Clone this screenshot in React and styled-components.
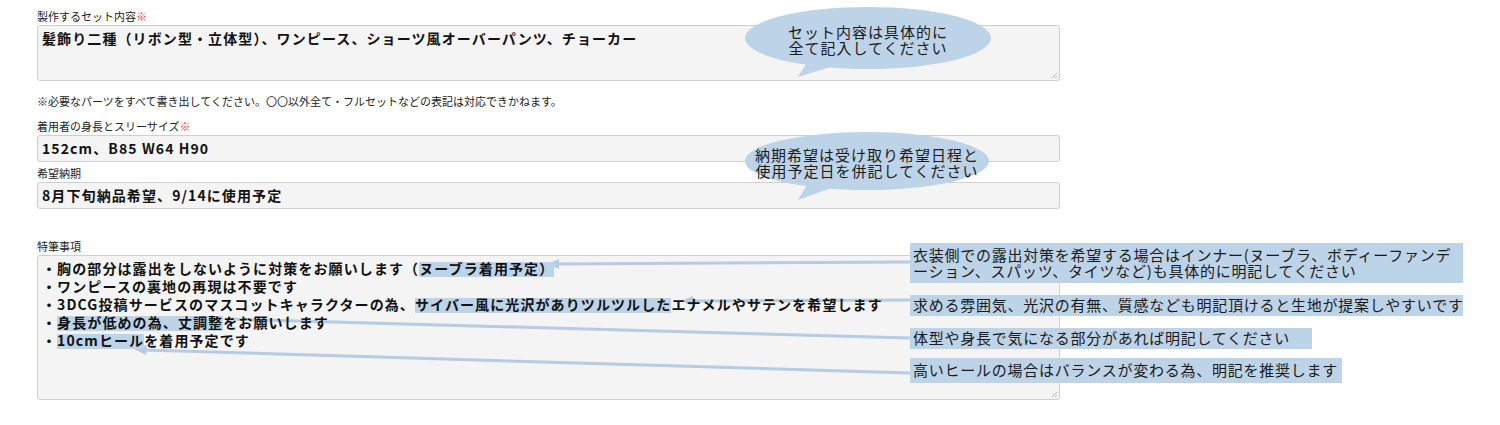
import styled, { createGlobalStyle } from "styled-components"

const GlobalStyle = createGlobalStyle`
body {
  margin: 0;
  background: #fff;
  font-family: "Noto Sans CJK JP", "Noto Sans", sans-serif;
}
`

const BLUE = "#bdd3e8"

const Page = styled.div`
position: relative;
width: 1500px;
height: 425px;
overflow: hidden;
box-sizing: border-box;
padding: 9px 0 0 37px;
`
const Form = styled.div`
width: 1023px;
display: flex;
flex-direction: column;
`
const Label = styled.div`
font-size: 11px;
line-height: 14px;
color: #222;
margin-top: ${props => props.$mt || 0}px;
margin-bottom: 2px;
`
const Req = styled.span`
color: #e8383d;
`
const Note = styled.div`
font-size: 11px;
line-height: 14px;
color: #222;
margin-top: 13px;
`
const Field = styled.div`
position: relative;
box-sizing: border-box;
height: ${props => props.$h}px;
padding: 3px 4px;
background: #f4f4f4;
border: 1px solid #cfcfcf;
border-radius: 3px;
font-size: 14px;
font-weight: 700;
letter-spacing: 1.1px;
line-height: 18px;
color: #111;
white-space: nowrap;
`
const Line = styled.div`
position: relative;
z-index: 2;
`
const Mark = styled.span`
background: linear-gradient(transparent 22%, ${BLUE} 22%, ${BLUE} 96%, transparent 96%);
`
const Grip = styled.svg`
position: absolute;
right: 1px;
bottom: 1px;
`
const Bubble = styled.div`
position: absolute;
z-index: 3;
left: 745px;
top: ${props => props.$top}px;
width: ${props => props.$w}px;
height: ${props => props.$h}px;
border-radius: 50%;
background: ${BLUE};
display: flex;
align-items: center;
justify-content: center;
text-align: center;
font-size: 15px;
letter-spacing: 1px;
line-height: 16px;
color: #1a1a1a;
padding-top: 3px;
box-sizing: border-box;
`
const Tail = styled.svg`
position: absolute;
left: 50px;
top: ${props => props.$top}px;
overflow: visible;
`
const Tip = styled.div`
position: absolute;
z-index: 3;
left: 910px;
top: ${props => props.$top}px;
width: ${props => props.$w}px;
height: ${props => props.$h}px;
box-sizing: border-box;
padding: ${props => props.$pad || "3px 3px"};
background: ${BLUE};
font-size: 15px;
line-height: 16px;
letter-spacing: 0.75px;
color: #1a1a1a;
white-space: nowrap;
`
const Arrows = styled.svg`
position: absolute;
left: 0;
top: 0;
z-index: 1;
pointer-events: none;
`

function ResizeGrip() {
  return (
    <Grip width="7" height="7" viewBox="0 0 7 7">
      <path d="M6 1 L1 6 M6 4 L4 6" stroke="#b5b5b5" strokeWidth="1" />
    </Grip>
  )
}

export default function App() {
  return (
    <>
      <GlobalStyle />
      <Page>
        <Form>
          <Label>製作するセット内容<Req>※</Req></Label>
          <Field $h={56}>
            <Line>髪飾り二種（リボン型・立体型）、ワンピース、ショーツ風オーバーパンツ、チョーカー</Line>
            <ResizeGrip />
          </Field>
          <Note>※必要なパーツをすべて書き出してください。〇〇以外全て・フルセットなどの表記は対応できかねます。</Note>

          <Label $mt={11}>着用者の身長とスリーサイズ<Req>※</Req></Label>
          <Field $h={27}>
            <Line>152cm、B85 W64 H90</Line>
          </Field>

          <Label $mt={4}>希望納期</Label>
          <Field $h={27}>
            <Line>8月下旬納品希望、9/14に使用予定</Line>
          </Field>

          <Label $mt={30}>特筆事項</Label>
          <Field $h={145}>
            <Line>・胸の部分は露出をしないように対策をお願いします（<Mark>ヌーブラ着用予定）</Mark></Line>
            <Line>・ワンピースの裏地の再現は不要です</Line>
            <Line>・3DCG投稿サービスのマスコットキャラクターの為、<Mark>サイバー風に光沢がありツルツルした</Mark>エナメルやサテンを希望します</Line>
            <Line>・<Mark>身長が低めの為、丈調整</Mark>をお願いします</Line>
            <Line>・<Mark>10cmヒール</Mark>を着用予定です</Line>
            <ResizeGrip />
          </Field>
        </Form>

        <Arrows width="1500" height="425" viewBox="0 0 1500 425">
          <g stroke="#b5cce2" strokeWidth="3" fill="none">
            <line x1="910" y1="262" x2="556" y2="264" />
            <line x1="910" y1="300" x2="690" y2="301" />
            <line x1="226" y1="319" x2="910" y2="338" />
            <line x1="144" y1="350" x2="910" y2="373" />
          </g>
          <g fill="#b5cce2">
            <polygon points="547,264 559,259 559,269" />
            <polygon points="681,301 693,296 693,306" />
            <polygon points="134,349 147,345 146,355" />
          </g>
        </Arrows>

        <Bubble $top={7} $w={246} $h={62}>
          <div>セット内容は具体的に<br />全て記入してください</div>
          <Tail $top={48} width="45" height="25">
            <polygon points="3,22 13,6 42,10" fill={BLUE} />
          </Tail>
        </Bubble>
        <Bubble $top={132} $w={244} $h={58}>
          <div>納期希望は受け取り希望日程と<br />使用予定日を併記してください</div>
          <Tail $top={45} width="45" height="25">
            <polygon points="3,23 13,6 42,9" fill={BLUE} />
          </Tail>
        </Bubble>

        <Tip $top={243} $w={553} $h={40} $pad="4px 3px">
          衣装側での露出対策を希望する場合はインナー(ヌーブラ、ボディーファンデ<br />
          ーション、スパッツ、タイツなど)も具体的に明記してください
        </Tip>
        <Tip $top={295} $w={553} $h={21} $pad="2px 3px">
          求める雰囲気、光沢の有無、質感なども明記頂けると生地が提案しやすいです
        </Tip>
        <Tip $top={328} $w={402} $h={21} $pad="2px 3px">
          体型や身長で気になる部分があれば明記してください
        </Tip>
        <Tip $top={358} $w={432} $h={25} $pad="4px 3px">
          高いヒールの場合はバランスが変わる為、明記を推奨します
        </Tip>
      </Page>
    </>
  )
}
